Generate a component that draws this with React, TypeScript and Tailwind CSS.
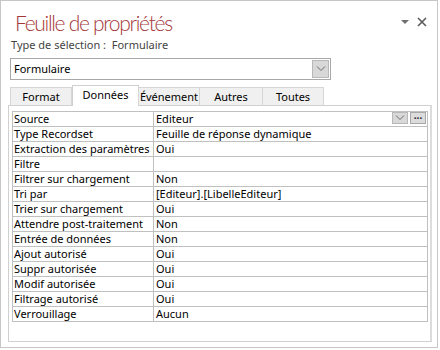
import React from "react";

const rows: [string, string][] = [
  ["Source", "Editeur"],
  ["Type Recordset", "Feuille de réponse dynamique"],
  ["Extraction des paramètres par défaut", "Oui"],
  ["Filtre", ""],
  ["Filtrer sur chargement", "Non"],
  ["Tri par", "[Editeur].[LibelleEditeur]"],
  ["Trier sur chargement", "Oui"],
  ["Attendre post-traitement", "Non"],
  ["Entrée de données", "Non"],
  ["Ajout autorisé", "Oui"],
  ["Suppr autorisée", "Oui"],
  ["Modif autorisée", "Oui"],
  ["Filtrage autorisé", "Oui"],
  ["Verrouillage", "Aucun"],
];

const tabs = [
  { name: "Format", w: 62 },
  { name: "Données", w: 67, active: true },
  { name: "Événement", w: 62 },
  { name: "Autres", w: 64 },
  { name: "Toutes", w: 62 },
];

function Chevron() {
  return (
    <svg width="10" height="6" viewBox="0 0 10 6">
      <path d="M1 0.5 L5 4.5 L9 0.5" fill="none" stroke="#6b6b6b" strokeWidth="1" />
    </svg>
  );
}

export default function App() {
  const font = { fontFamily: '"Noto Sans", "Open Sans", sans-serif' };
  return (
    <div className="w-[440px] h-[350px] bg-white">
      <div
        className="relative w-[438px] h-[348px] border border-[#c6c6c6] bg-white flex flex-col"
        style={font}
      >
        <div
          className="pl-[14px] pt-[8px] h-[36px] text-[21px] leading-[28px] tracking-[-1.3px] text-[#a4373a] font-light"
          style={{ fontFamily: '"Lato", sans-serif' }}
        >
          Feuille de propriétés
        </div>
        <div className="absolute top-[16px] left-[399px] flex items-center gap-[7px]">
          <svg width="10" height="6" viewBox="0 0 10 6">
            <path d="M1 1 H9 L5 5 Z" fill="#707070" />
          </svg>
          <svg width="10" height="10" viewBox="0 0 10 10">
            <path d="M1 1 L9 9 M9 1 L1 9" stroke="#5a5a5a" strokeWidth="1.6" />
          </svg>
        </div>
        <div className="pl-[10px] h-[21px] text-[11px] leading-[16px] text-[#444]">
          Type de sélection :&nbsp; Formulaire
        </div>
        <div className="ml-[9px] w-[321px] h-[22px] border border-[#a8a8a8] flex items-center justify-between">
          <span className="pl-[3px] text-[11px] text-black leading-[16px]">Formulaire</span>
          <div className="mr-[1px] w-[17px] h-[18px] bg-[#d8d8d8] border border-[#b8b8b8] flex items-center justify-center">
            <Chevron />
          </div>
        </div>
        <div className="ml-[9px] mt-[5px] h-[20px] flex items-end relative z-10">
          {tabs.map((t) =>
            t.active ? (
              <div
                key={t.name}
                className="h-[21px] -mb-[1px] bg-white border border-b-0 border-[#d0d0d0] flex items-start justify-center pt-[1px] text-[11px] leading-[16px] text-black"
                style={{ width: t.w }}
              >
                {t.name}
              </div>
            ) : (
              <div
                key={t.name}
                className="h-[18px] bg-[#f0f0f0] border border-b-0 border-[#d6d6d6] flex items-start justify-center pt-[1px] text-[11px] leading-[16px] text-black -ml-[1px] first:ml-0"
                style={{ width: t.w }}
              >
                {t.name}
              </div>
            )
          )}
        </div>
        <div className="ml-[7px] w-[424px] h-[237px] border border-[#d0d0d0] border-r-2 border-r-[#dcdcdc] bg-white pt-[5px] pl-[3px]">
          <div className="w-[416px] border-t border-l border-[#c0c0c0]">
            {rows.map(([k, v], i) => (
              <div key={k} className="flex h-[15px] border-b border-[#c0c0c0] text-[11px] leading-[14px] text-black">
                <div className="w-[141px] border-r border-[#c0c0c0] pl-[1px] overflow-hidden whitespace-nowrap">
                  {k}
                </div>
                <div className="flex-1 border-r border-[#c0c0c0] pl-[2px] flex justify-between items-start whitespace-nowrap overflow-hidden">
                  <span>{v}</span>
                  {i === 0 && (
                    <div className="flex gap-[2px] mr-[1px]">
                      <div className="w-[16px] h-[12px] bg-[#d8d8d8] border border-[#b8b8b8] flex items-center justify-center">
                        <Chevron />
                      </div>
                      <div className="w-[16px] h-[12px] bg-[#dcdcdc] border border-[#a8a8a8] flex items-center justify-center text-[10px] leading-[8px] font-bold text-[#222]">
                        ···
                      </div>
                    </div>
                  )}
                </div>
              </div>
            ))}
          </div>
        </div>
      </div>
    </div>
  );
}
